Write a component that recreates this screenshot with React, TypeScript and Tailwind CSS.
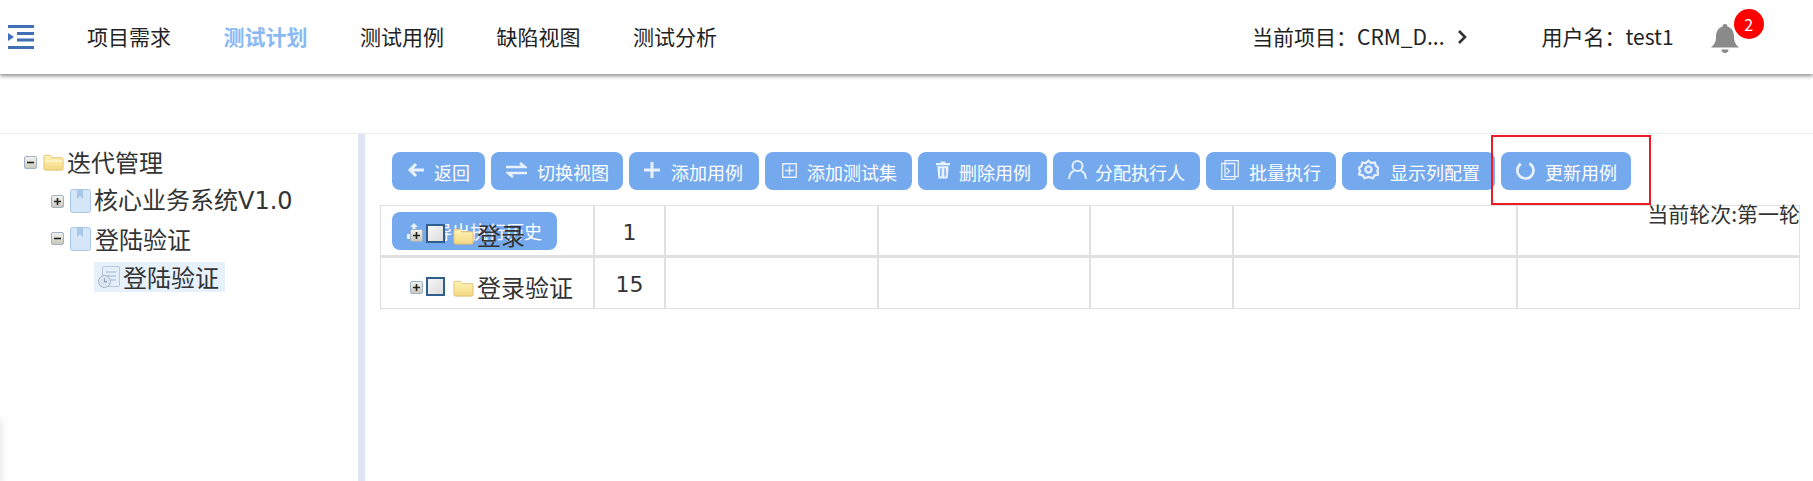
import React from "react";

const CJK = "font-['Noto_Sans_CJK_SC','Noto_Sans',sans-serif]";

function Toggle({ open }: { open?: boolean }) {
  return (
    <svg viewBox="0 0 13 13" className="block w-[13px] h-[13px] shrink-0">
      <defs>
        <linearGradient id={open ? "tgo" : "tgc"} x1="0" y1="0" x2="0" y2="1">
          <stop offset="0" stopColor="#f4f4f0" />
          <stop offset="1" stopColor="#c9c6bb" />
        </linearGradient>
      </defs>
      <rect x="0.5" y="0.5" width="12" height="12" rx="1.5" fill={`url(#${open ? "tgo" : "tgc"})`} stroke="#9fb3c8" />
      <path d={open ? "M3 6.5h7" : "M3 6.5h7M6.5 3v7"} stroke="#222" strokeWidth="1.6" />
    </svg>
  );
}

function Folder({ open }: { open?: boolean }) {
  return (
    <svg viewBox="0 0 22 18" className="block w-[21px] h-[18px] shrink-0">
      <defs>
        <linearGradient id="fg" x1="0" y1="0" x2="0" y2="1">
          <stop offset="0" stopColor="#fff4b8" />
          <stop offset="1" stopColor="#f3d884" />
        </linearGradient>
      </defs>
      <path d="M1 3.5A1.5 1.5 0 0 1 2.5 2h5l2 2.5h10A1.5 1.5 0 0 1 21 6v10a1.5 1.5 0 0 1-1.5 1.500h-17A1.5 1.5 0 0 1 1 16z" fill="url(#fg)" stroke="#e0c070" />
      {open && <path d="M1.5 8h19" stroke="#fff6cf" strokeWidth="1.5" />}
    </svg>
  );
}

function Book() {
  return (
    <svg viewBox="0 0 21 24" className="block w-[21px] h-[24px] shrink-0">
      <rect x="0.5" y="0.5" width="20" height="23" rx="2" fill="#d5e6f8" stroke="#a9c7e8" />
      <path d="M7 1h6v9l-3-2.5L7 10z" fill="#a9c7e8" />
    </svg>
  );
}

function DocClock() {
  return (
    <svg viewBox="0 0 24 24" className="block w-[24px] h-[24px] shrink-0">
      <rect x="5.5" y="1.5" width="17" height="20" rx="1.5" fill="#e4eef9" stroke="#b4c9e0" />
      <path d="M9 7h10M10 11h9M12 15h7" stroke="#b4c9e0" strokeWidth="1.5" />
      <circle cx="7.5" cy="16.5" r="6" fill="#dbe6f2" stroke="#9fb3c8" />
      <path d="M7.5 13.5v3.2h2.5" stroke="#8a9db3" fill="none" strokeWidth="1.2" />
    </svg>
  );
}

function CheckBox() {
  return (
    <span className="block w-[19px] h-[19px] shrink-0 border-2 border-[#2f5f8f] bg-gradient-to-br from-[#f6f6f6] to-[#dddddd]" />
  );
}

const ic = "fill-none stroke-[#e8f1fd] shrink-0";

function Btn({ className, icon, gapClass, children }: { className: string; icon: React.ReactNode; gapClass: string; children: React.ReactNode }) {
  return (
    <button className={`h-[38px] rounded-[8px] bg-[#75a9ee] flex items-center pl-[15px] text-white text-[18px] whitespace-nowrap ${className}`}>
      {icon}
      <span className={`${gapClass} pt-[1px] leading-none`}>{children}</span>
    </button>
  );
}

export default function App() {
  return (
    <div className={`relative w-[1813px] h-[481px] overflow-hidden bg-white ${CJK}`}>
      <header className="relative z-10 h-[74px] bg-white flex items-center shadow-[0_2px_4px_rgba(0,0,0,0.45)]">
        <svg viewBox="0 0 26 24" className="ml-[8px] w-[26px] h-[24px] shrink-0">
          <path d="M0 1.5h26M9 8.5h17M9 15h17M0 22.5h26" stroke="#3f6fb5" strokeWidth="3" />
          <path d="M0 8l6 4-6 4z" fill="#3f6fb5" />
        </svg>
        <nav className="ml-[53px] flex gap-[52.5px] text-[21px] text-[#222]">
          <span>项目需求</span>
          <span className="font-bold text-[#8ab8f5]">测试计划</span>
          <span>测试用例</span>
          <span>缺陷视图</span>
          <span>测试分析</span>
        </nav>
        <div className="ml-[535px] flex items-center text-[21px] text-[#222] whitespace-nowrap">
          <span>当前项目：CRM_D...</span>
          <svg viewBox="0 0 10 16" className="ml-[12px] w-[10px] h-[16px]">
            <path d="M2 2l6 6-6 6" fill="none" stroke="#333" strokeWidth="2.6" />
          </svg>
          <span className="ml-[75px]">用户名：test1</span>
          <span className="relative ml-[37px] w-[28px] h-[30px] block">
            <svg viewBox="0 0 28 30" className="w-[28px] h-[30px] mt-[2px]">
              <path d="M14 0a2.5 2.5 0 0 1 2.5 2.6C21 4 23 8 23 12.5c0 5 1.5 8 5 11H0c3.5-3 5-6 5-11C5 8 7 4 11.500 2.600A2.500 2.500 0 0 1 14 0zM10.500 25.500h7a3.500 3.500 0 0 1-7 0z" fill="#8a8a8a" />
            </svg>
            <span className="absolute left-[23px] top-[-13px] w-[30px] h-[30px] rounded-full bg-[#ff0000] text-white text-[16px] flex items-center justify-center">2</span>
          </span>
        </div>
      </header>

      <div className="mt-[59px] h-[348px] flex border-t border-[#ececec]">
        <aside className="w-[358px] shrink-0 pl-[24px] pt-[12px] text-[24px] text-[#333] font-['DejaVu_Sans','Noto_Sans_CJK_SC',sans-serif]">
          <div className="flex items-center h-[32px]">
            <Toggle open />
            <span className="ml-[6px]"><Folder open /></span>
            <span className="ml-[3px] font-['Noto_Sans_CJK_SC',sans-serif]">迭代管理</span>
          </div>
          <div className="flex items-center h-[38px] mt-[4px] pl-[27px]">
            <Toggle />
            <span className="ml-[6px]"><Book /></span>
            <span className="ml-[3px] whitespace-nowrap">核心业务系统V1.0</span>
          </div>
          <div className="flex items-center h-[37px] pl-[27px]">
            <Toggle open />
            <span className="ml-[6px]"><Book /></span>
            <span className="ml-[4px] font-['Noto_Sans_CJK_SC',sans-serif]">登陆验证</span>
          </div>
          <div className="ml-[70px] mt-[5px] w-[131px] h-[30px] bg-[#e6f1fc] flex items-center pl-[3px]">
            <DocClock />
            <span className="ml-[2px] font-['Noto_Sans_CJK_SC',sans-serif]">登陆验证</span>
          </div>
        </aside>
        <div className="w-[7px] shrink-0 bg-[#e0e4f3]" />
        <main className="relative flex-1 pl-[15px] pt-[18px]">
          <div className="ml-[12px] flex gap-[6px]">
            <Btn className="w-[93px]" gapClass="ml-[9px]" icon={
              <svg viewBox="0 0 18 16" className={`w-[18px] h-[16px] -mt-[2px] ${ic}`} strokeWidth="3"><path d="M17 8H3M9 2L3 8l6 6" /></svg>
            }>返回</Btn>
            <Btn className="w-[132px]" gapClass="ml-[10px]" icon={
              <svg viewBox="0 0 21 16" className={`w-[21px] h-[16px] -mt-[2px] ${ic}`} strokeWidth="2.6"><path d="M0 5h19l-5-4M21 11H2l5 4" /></svg>
            }>切换视图</Btn>
            <Btn className="w-[130px]" gapClass="ml-[11px]" icon={
              <svg viewBox="0 0 16 16" className={`w-[16px] h-[16px] -mt-[2px] ${ic}`} strokeWidth="3"><path d="M8 0v16M0 8h16" /></svg>
            }>添加用例</Btn>
            <Btn className="w-[147px] pl-[17px]" gapClass="ml-[10px]" icon={
              <svg viewBox="0 0 15 15" className={`w-[15px] h-[15px] -mt-[2px] ${ic}`} strokeWidth="1.4"><path d="M.7.7h13.600v13.600H.7zM7.500 3v9M3 7.500h9" /></svg>
            }>添加测试集</Btn>
            <Btn className="w-[129px] pl-[18px]" gapClass="ml-[9px]" icon={
              <svg viewBox="0 0 15 18" className="w-[14px] h-[18px] shrink-0 -mt-[2px]" fill="#e8f1fd"><path d="M5 0h5v1.500h5V4H0V1.500h5zM1.500 5h12l-1 13h-10zM4.500 7v9H6V7zM9 7v9h1.500V7z" fillRule="evenodd" /></svg>
            }>删除用例</Btn>
            <Btn className="w-[147px]" gapClass="ml-[8px]" icon={
              <svg viewBox="0 0 19 20" className={`w-[19px] h-[20px] -mt-[3px] ${ic}`} strokeWidth="2"><circle cx="9.500" cy="6" r="5" /><path d="M1 19c.5-5 3-7.500 5-8M18 19c-.5-5-3-7.500-5-8" /></svg>
            }>分配执行人</Btn>
            <Btn className="w-[130px]" gapClass="ml-[10px]" icon={
              <svg viewBox="0 0 18 20" className={`w-[18px] h-[20px] -mt-[2px] ${ic}`} strokeWidth="1.3"><path d="M4 .7h13.300v16H4zM.7 3.500h13v16H.7zM5.500 8l3 3-3 3" /></svg>
            }>批量执行</Btn>
            <Btn className="w-[153px] pl-[16px]" gapClass="ml-[11px]" icon={
              <svg viewBox="0 0 24 24" className={`w-[21px] h-[21px] -mt-[3px] ${ic}`} strokeWidth="2.6"><path d="M12 2l3 2.600 4-.6 1.500 3.800 3 2.600-1.500 3.600 1.500 3.600-4.500 1-2 3.400L12 20.500 7.500 22 5.500 18.600 1 17.600l1.500-3.600L1 10.400l3-2.600L5 4l4 .6z" /><circle cx="12" cy="12" r="3.500" /></svg>
            }>显示列配置</Btn>
            <Btn className="w-[130px]" gapClass="ml-[10px]" icon={
              <svg viewBox="0 0 20 20" className={`w-[19px] h-[19px] -mt-[1px] ${ic}`} strokeWidth="2.800"><path d="M5 3a8.500 8.500 0 1 0 9-.5" /></svg>
            }>更新用例</Btn>
          </div>

          <div className="absolute left-[27px] top-[78px] z-0 w-[165px] h-[38px] rounded-[8px] bg-[#75a9ee] flex items-center pl-[15px] text-white text-[18px] whitespace-nowrap">
            <svg viewBox="0 0 14 16" className="w-[14px] h-[16px] shrink-0" fill="#e8f1fd"><path d="M7 0l4 4H8.500v5h-3V4H3zM0 11h14v5H0z" /></svg>
            <span className="ml-[13px]">导出执行历史</span>
          </div>

          <div className="relative z-10 mt-[15px] w-[1420px] h-[104px] border border-[#e0e0e0] grid grid-cols-[214px_71px_213px_212px_143px_284px_1fr] grid-rows-[52px_1fr] text-[#333] text-[22px] font-['DejaVu_Sans','Noto_Sans_CJK_SC',sans-serif]">
            <div className="border-r-2 border-b-[3px] border-[#e0e0e0] flex items-center pl-[29px]">
              <span className="mt-[10px]"><Toggle /></span>
              <span className="ml-[3px] mt-[6px]"><CheckBox /></span>
              <span className="ml-[8px] mt-[10px]"><Folder /></span>
              <span className="ml-[3px] text-[24px] pt-[8px] font-['Noto_Sans_CJK_SC',sans-serif]">登录</span>
            </div>
            <div className="border-r-2 border-b-[3px] border-[#e0e0e0] flex items-center justify-center pt-[4px]">1</div>
            <div className="border-r-2 border-b-[3px] border-[#e0e0e0]" />
            <div className="border-r-2 border-b-[3px] border-[#e0e0e0]" />
            <div className="border-r-2 border-b-[3px] border-[#e0e0e0]" />
            <div className="border-r-2 border-b-[3px] border-[#e0e0e0]" />
            <div className="border-b-[3px] border-[#e0e0e0]" />
            <div className="border-r-2 border-[#e0e0e0] flex items-center pl-[29px]">
              <span className="mt-[8px]"><Toggle /></span>
              <span className="ml-[3px] mt-[6px]"><CheckBox /></span>
              <span className="ml-[8px] mt-[10px]"><Folder /></span>
              <span className="ml-[3px] text-[24px] pt-[8px] font-['Noto_Sans_CJK_SC',sans-serif]">登录验证</span>
            </div>
            <div className="border-r-2 border-[#e0e0e0] flex items-center justify-center pt-[2px]">15</div>
            <div className="border-r-2 border-[#e0e0e0]" />
            <div className="border-r-2 border-[#e0e0e0]" />
            <div className="border-r-2 border-[#e0e0e0]" />
            <div className="border-r-2 border-[#e0e0e0]" />
            <div />
          </div>

          <div className="absolute z-20 right-[13px] top-[64px] text-[21px] text-[#333] whitespace-nowrap">当前轮次:第一轮</div>
          <div className="absolute z-20 left-[1126px] top-[1px] w-[160px] h-[70px] border-2 border-[#ed1c24]" />
        </main>
      </div>
      <div className="absolute left-[-3px] top-[418px] w-[2px] h-[70px] shadow-[0_0_8px_rgba(0,0,0,0.35)] bg-[#bbb]" />
    </div>
  );
}
